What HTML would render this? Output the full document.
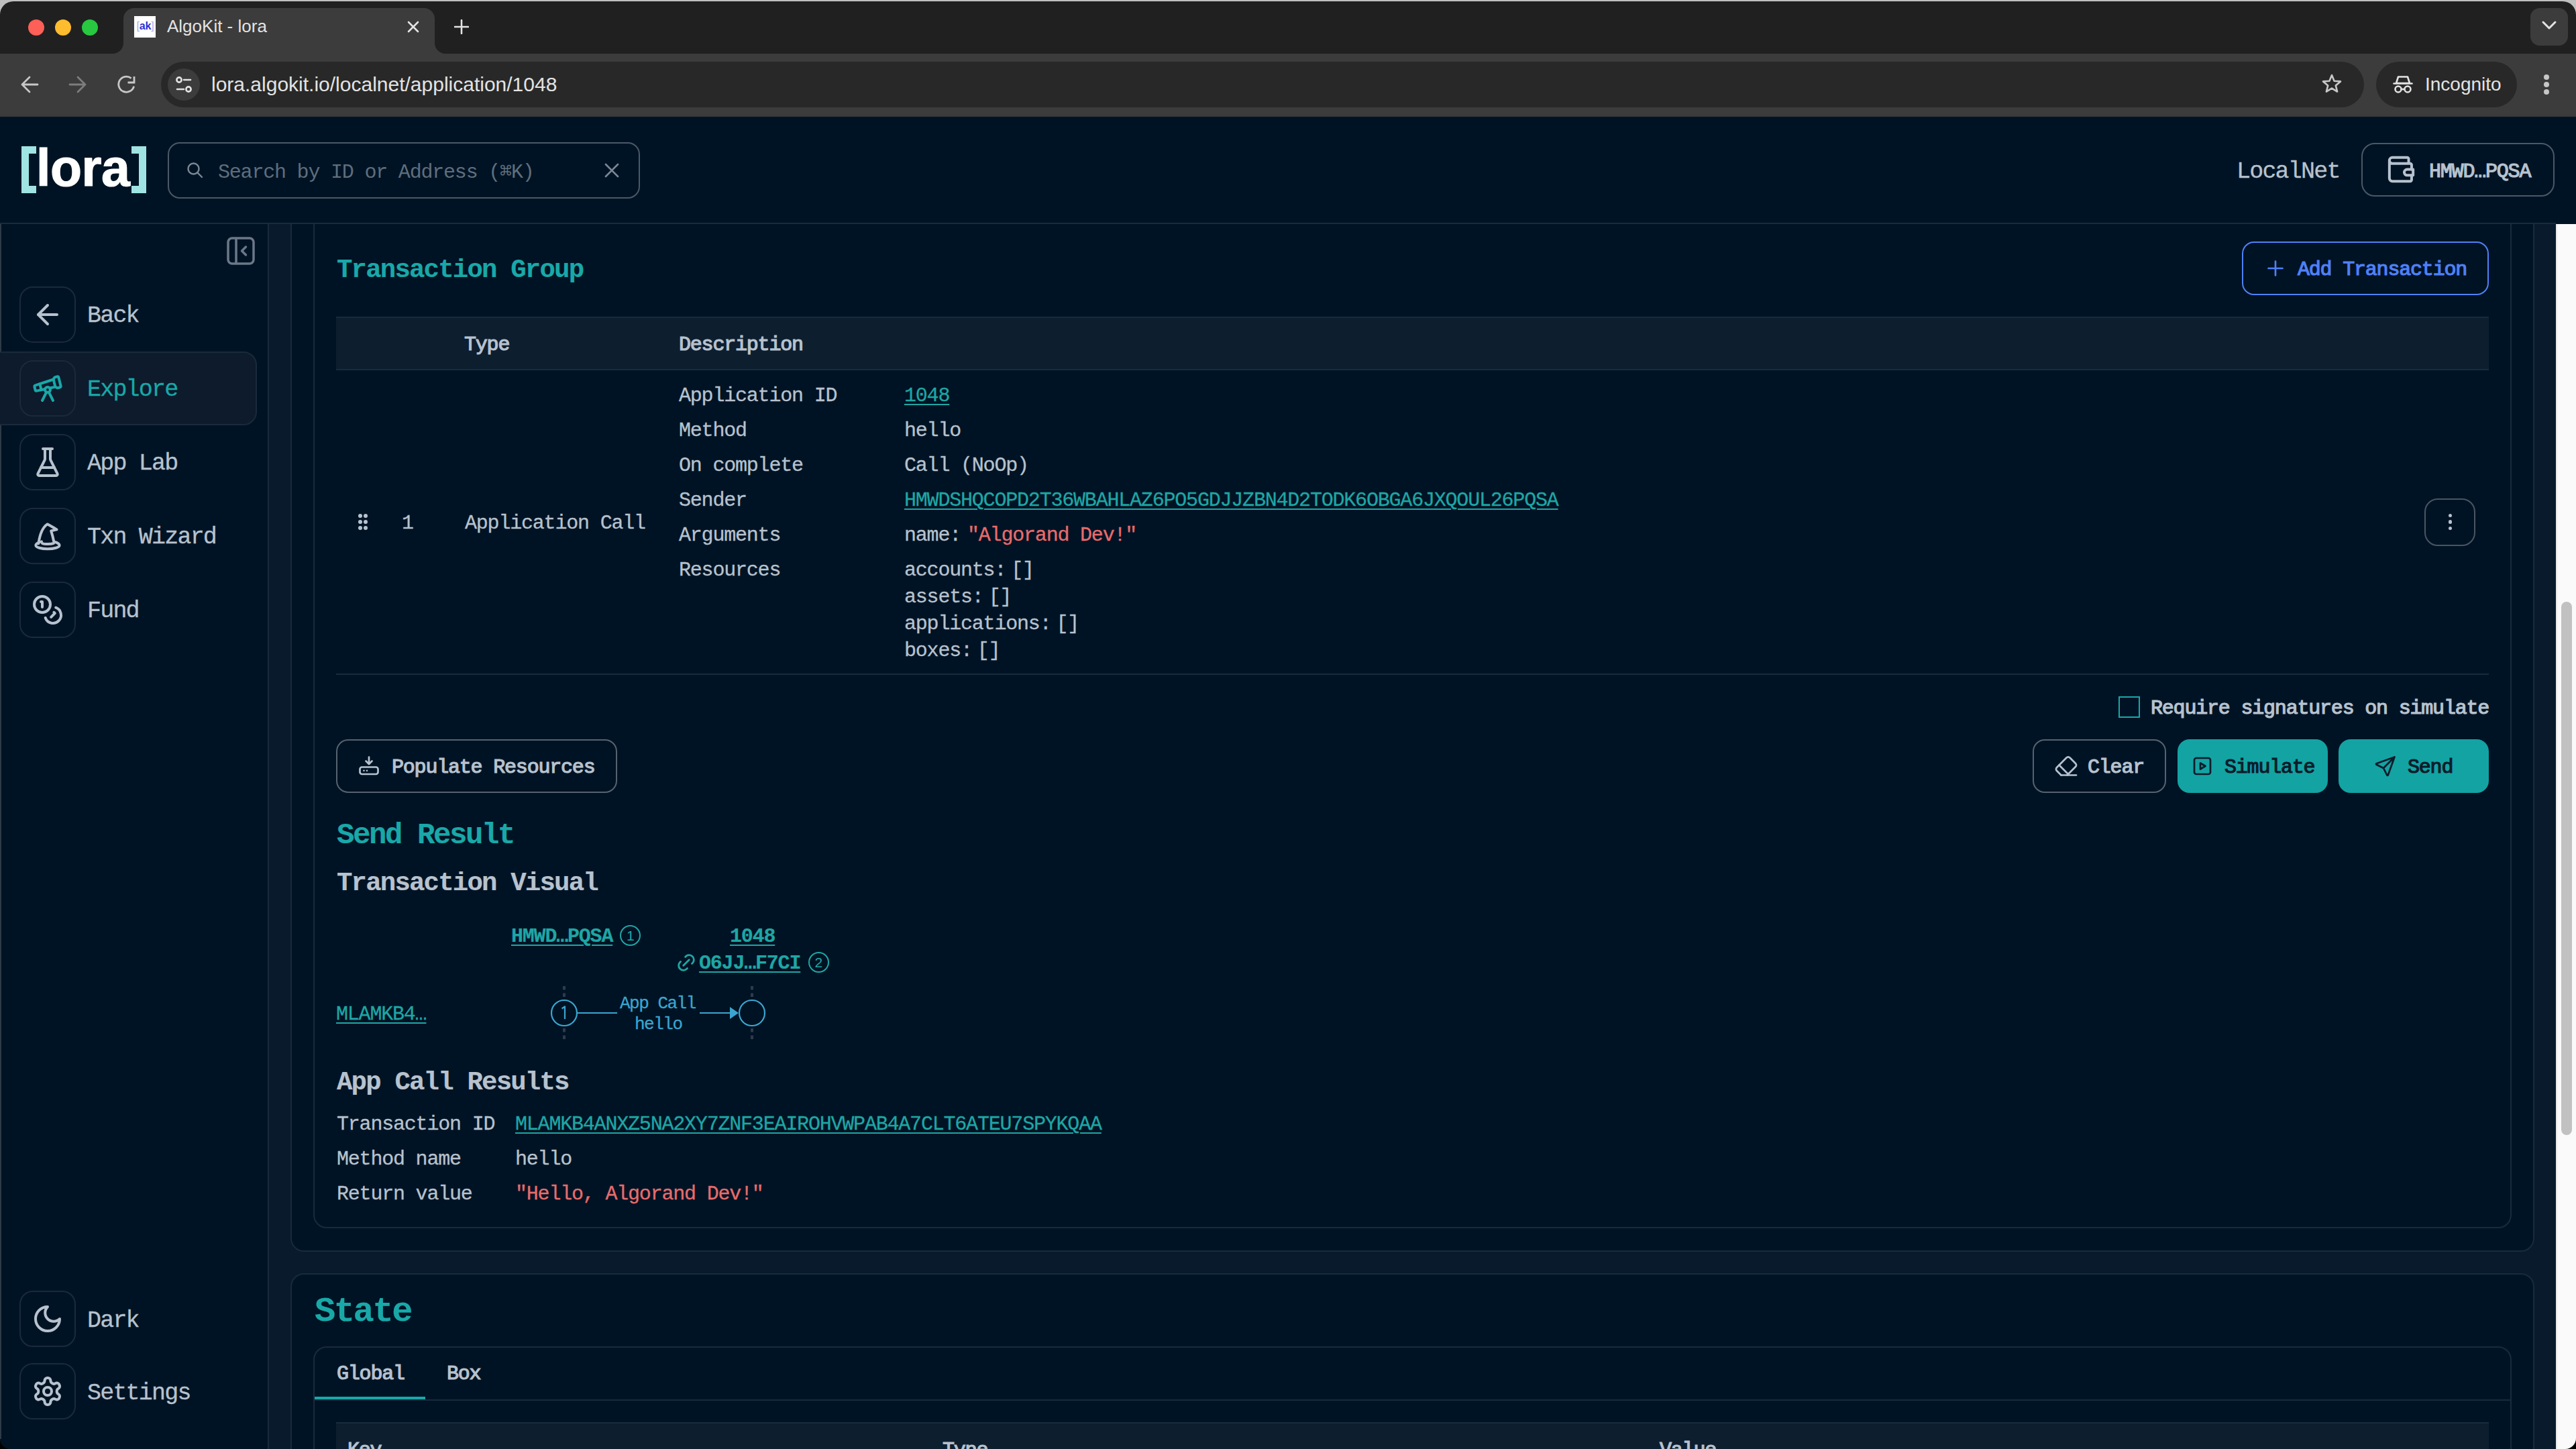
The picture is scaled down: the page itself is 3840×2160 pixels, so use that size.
<!DOCTYPE html><html><head><meta charset="utf-8"><style>
html,body{margin:0;padding:0;width:3840px;height:2160px;overflow:hidden;background:#000;}
.t{position:absolute;white-space:pre;}
.r{position:absolute;box-sizing:border-box;}
u{text-decoration:underline;text-decoration-thickness:2px;text-underline-offset:4px;}
</style></head><body>
<div class="r" style="left:0px;top:0px;width:3840px;height:60px;background:#bfbfbf;border-radius:0;"></div>
<div class="r" style="left:0px;top:1000px;width:3840px;height:1160px;background:#000000;border-radius:0;"></div>
<div class="r" style="left:0px;top:1.5px;width:3840px;height:2158.5px;background:#202020;border-radius:20px 20px 16px 16px;"></div>
<div class="r" style="left:184px;top:12px;width:464px;height:68px;background:#3c3c3c;border-radius:16px 16px 0 0;"></div>
<svg class="r" style="left:168px;top:64px;" width="16" height="16" viewBox="0 0 16 16" fill="none"><path d="M16 0 V16 H0 A16 16 0 0 0 16 0Z" fill="#3c3c3c"/></svg>
<svg class="r" style="left:648px;top:64px;" width="16" height="16" viewBox="0 0 16 16" fill="none"><path d="M0 0 V16 H16 A16 16 0 0 1 0 0Z" fill="#3c3c3c"/></svg>
<div class="r" style="left:42px;top:29px;width:24px;height:24px;background:#fe5f57;border-radius:50%;"></div>
<div class="r" style="left:82px;top:29px;width:24px;height:24px;background:#febc2e;border-radius:50%;"></div>
<div class="r" style="left:122px;top:29px;width:24px;height:24px;background:#28c840;border-radius:50%;"></div>
<div class="r" style="left:200px;top:24px;width:32px;height:32px;background:#ffffff;border-radius:0;"></div>
<div class="t" style="left:203.50px;top:31.45px;font-size:16px;line-height:16px;color:#2f2fd0;font-weight:700;letter-spacing:-0.2px;font-family:'Liberation Sans', sans-serif;"><span style="color:#a8a8ee;font-weight:400">[</span>ak<span style="color:#a8a8ee;font-weight:400">]</span></div>
<div class="t" style="left:249.00px;top:25.99px;font-size:26px;line-height:26px;color:#e3e3e3;font-weight:400;letter-spacing:0px;font-family:'Liberation Sans', sans-serif;">AlgoKit - lora</div>
<svg class="r" style="left:606px;top:30px;" width="20" height="20" viewBox="0 0 20 20" fill="none"><path d="M3 3L17 17M17 3L3 17" stroke="#e3e3e3" stroke-width="2.6" stroke-linecap="round"/></svg>
<svg class="r" style="left:677px;top:29px;" width="22" height="22" viewBox="0 0 22 22" fill="none"><path d="M11 1V21M1 11H21" stroke="#e3e3e3" stroke-width="2.6" stroke-linecap="round"/></svg>
<div class="r" style="left:3772px;top:12px;width:56px;height:56px;background:#3c3c3c;border-radius:14px;"></div>
<svg class="r" style="left:3788px;top:30px;" width="24" height="16" viewBox="0 0 24 16" fill="none"><path d="M3 3L12 12L21 3" stroke="#e3e3e3" stroke-width="3" fill="none" stroke-linecap="round" stroke-linejoin="round"/></svg>
<div class="r" style="left:0px;top:80px;width:3840px;height:94px;background:#3c3c3c;border-radius:0;"></div>
<div class="r" style="left:0px;top:171px;width:3840px;height:3px;background:#3d3a38;border-radius:0;"></div>
<svg class="r" style="left:30px;top:112px;" width="28" height="28" viewBox="0 0 28 28" fill="none"><path d="M26 14H3M14 3L3 14L14 25" stroke="#c7c7c7" stroke-width="2.8" stroke-linecap="round" stroke-linejoin="round"/></svg>
<svg class="r" style="left:102px;top:112px;" width="28" height="28" viewBox="0 0 28 28" fill="none"><path d="M2 14H25M14 3L25 14L14 25" stroke="#7d7d7d" stroke-width="2.8" stroke-linecap="round" stroke-linejoin="round"/></svg>
<svg class="r" style="left:174px;top:112px;" width="28" height="28" viewBox="0 0 28 28" fill="none"><path d="M25.6 16.6A11.6 11.6 0 1 1 21.6 4.6" stroke="#c7c7c7" stroke-width="2.8" fill="none"/><path d="M16.5 11H26V2" stroke="#c7c7c7" stroke-width="2.8" fill="none" stroke-linejoin="miter"/></svg>
<div class="r" style="left:240px;top:92px;width:3284px;height:68px;background:#282828;border-radius:34px;"></div>
<div class="r" style="left:250px;top:102px;width:48px;height:48px;background:#3c3c3c;border-radius:50%;"></div>
<svg class="r" style="left:258px;top:110px;" width="32" height="32" viewBox="0 0 32 32" fill="none"><circle cx="9" cy="9" r="3.6" stroke="#e3e3e3" stroke-width="2.6"/><path d="M16 9H26" stroke="#e3e3e3" stroke-width="2.6" stroke-linecap="round"/><circle cx="23" cy="23" r="3.6" stroke="#e3e3e3" stroke-width="2.6"/><path d="M6 23H16" stroke="#e3e3e3" stroke-width="2.6" stroke-linecap="round"/></svg>
<div class="t" style="left:315.00px;top:110.60px;font-size:30px;line-height:30px;color:#e3e3e3;font-weight:400;letter-spacing:0px;font-family:'Liberation Sans', sans-serif;">lora.algokit.io/localnet/application/1048</div>
<svg class="r" style="left:3460px;top:109px;" width="32" height="32" viewBox="0 0 32 32" fill="none"><path d="M16 3L19.6 11.8L29 12.4L21.8 18.4L24.1 27.6L16 22.6L7.9 27.6L10.2 18.4L3 12.4L12.4 11.8Z" stroke="#c7c7c7" stroke-width="2.6" stroke-linejoin="round" fill="none"/></svg>
<div class="r" style="left:3542px;top:92px;width:210px;height:68px;background:#282828;border-radius:34px;"></div>
<svg class="r" style="left:3566px;top:110px;" width="32" height="32" viewBox="0 0 32 32" fill="none"><path d="M9 4.5H23L26 14H6Z" stroke="#e3e3e3" stroke-width="2.6" stroke-linejoin="round"/><path d="M2.5 14.5H29.5" stroke="#e3e3e3" stroke-width="2.6" stroke-linecap="round"/><circle cx="9" cy="23" r="4.5" stroke="#e3e3e3" stroke-width="2.6"/><circle cx="23" cy="23" r="4.5" stroke="#e3e3e3" stroke-width="2.6"/><path d="M13.5 23H18.5" stroke="#e3e3e3" stroke-width="2.6"/></svg>
<div class="t" style="left:3615.00px;top:112.29px;font-size:28px;line-height:28px;color:#e3e3e3;font-weight:400;letter-spacing:0px;font-family:'Liberation Sans', sans-serif;">Incognito</div>
<div class="r" style="left:3792px;top:111px;width:8px;height:8px;background:#c7c7c7;border-radius:50%;"></div>
<div class="r" style="left:3792px;top:122px;width:8px;height:8px;background:#c7c7c7;border-radius:50%;"></div>
<div class="r" style="left:3792px;top:133px;width:8px;height:8px;background:#c7c7c7;border-radius:50%;"></div>
<div class="r" style="left:0px;top:174px;width:3840px;height:1986px;background:#001324;border-radius:0 0 16px 16px;"></div>
<div class="r" style="left:401px;top:334px;width:3409px;height:1826px;background:#081a2b;border-radius:0;"></div>
<div class="r" style="left:399px;top:334px;width:2px;height:1826px;background:#182b3c;border-radius:0;"></div>
<div class="r" style="left:0px;top:174px;width:1.5px;height:1971px;background:#2c3a48;border-radius:0;"></div>
<div class="r" style="left:3810px;top:334px;width:30px;height:1826px;background:#fafafa;border-radius:0 0 16px 0;"></div>
<div class="r" style="left:3810px;top:334px;width:2px;height:1826px;background:#e9e9e9;border-radius:0;"></div>
<div class="r" style="left:3818px;top:897px;width:16px;height:795px;background:#c1c1c1;border-radius:8px;"></div>
<div class="r" style="left:433px;top:200px;width:3345px;height:1666px;background:#001324;border:2px solid #182b3c;border-radius:20px;"></div>
<div class="r" style="left:467px;top:200px;width:3277px;height:1631px;background:#001324;border:2px solid #182b3c;border-radius:20px;"></div>
<div class="r" style="left:433px;top:1898px;width:3345px;height:402px;background:#001324;border:2px solid #182b3c;border-radius:20px;"></div>
<div class="r" style="left:467px;top:2007px;width:3277px;height:293px;background:#001324;border:2px solid #182b3c;border-radius:20px;"></div>
<div class="r" style="left:0px;top:174px;width:3810px;height:158px;background:#001324;border-radius:0;"></div>
<div class="r" style="left:0px;top:332px;width:3810px;height:2px;background:#182b3c;border-radius:0;"></div>
<div class="r" style="left:32px;top:218px;width:11px;height:70px;background:#9fe3e3;border-radius:0;"></div>
<div class="r" style="left:32px;top:218px;width:22px;height:11px;background:#9fe3e3;border-radius:0;"></div>
<div class="r" style="left:32px;top:277px;width:22px;height:11px;background:#9fe3e3;border-radius:0;"></div>
<div class="r" style="left:207px;top:218px;width:11px;height:70px;background:#9fe3e3;border-radius:0;"></div>
<div class="r" style="left:196px;top:218px;width:22px;height:11px;background:#9fe3e3;border-radius:0;"></div>
<div class="r" style="left:196px;top:277px;width:22px;height:11px;background:#9fe3e3;border-radius:0;"></div>
<div class="t" style="left:54.00px;top:212.30px;font-size:77px;line-height:77px;color:#ffffff;font-weight:700;letter-spacing:-0.5px;font-family:'Liberation Sans', sans-serif;-webkit-text-stroke:1.2px #fff;">lora</div>
<div class="r" style="left:250px;top:212px;width:704px;height:84px;background:transparent;border:2px solid #4a5867;border-radius:18px;"></div>
<svg class="r" style="left:277px;top:240px;" width="28" height="28" viewBox="0 0 28 28" fill="none"><circle cx="11.5" cy="11.5" r="8" stroke="#7a8896" stroke-width="2.4"/><path d="M17.5 17.5L24 24" stroke="#7a8896" stroke-width="2.4" stroke-linecap="round"/></svg>
<div class="t" style="left:325.00px;top:242.02px;font-size:30px;line-height:30px;color:#5f6e7d;font-weight:400;letter-spacing:-1.2px;font-family:'Liberation Mono', monospace;-webkit-text-stroke:0.3px currentColor;-webkit-text-stroke:0px;">Search by ID or Address (⌘K)</div>
<svg class="r" style="left:900px;top:242px;" width="24" height="24" viewBox="0 0 24 24" fill="none"><path d="M3 3L21 21M21 3L3 21" stroke="#7a8896" stroke-width="2.6" stroke-linecap="round"/></svg>
<div class="t" style="left:3334.00px;top:239.19px;font-size:35px;line-height:35px;color:#b7c2ce;font-weight:400;letter-spacing:-1.8px;font-family:'Liberation Mono', monospace;-webkit-text-stroke:0.3px currentColor;">LocalNet</div>
<div class="r" style="left:3520px;top:213px;width:288px;height:80px;background:transparent;border:2px solid #4a5867;border-radius:20px;"></div>
<svg class="r" style="left:3552.8px;top:226.3px;" width="53" height="53" viewBox="0 0 24 24" fill="none"><path d="M17 8v-3a1 1 0 0 0 -1 -1h-10a2 2 0 0 0 0 4h12a1 1 0 0 1 1 1v3m0 4v3a1 1 0 0 1 -1 1h-12a2 2 0 0 1 -2 -2v-12" stroke="#b7c2ce" stroke-width="1.8" stroke-linecap="round" stroke-linejoin="round"/><path d="M20 12v4h-4a2 2 0 0 1 0 -4h4" stroke="#b7c2ce" stroke-width="1.8" stroke-linecap="round" stroke-linejoin="round"/></svg>
<div class="t" style="left:3621.00px;top:241.02px;font-size:30px;line-height:30px;color:#b7c2ce;font-weight:400;letter-spacing:-1.2px;font-family:'Liberation Mono', monospace;-webkit-text-stroke:1.2px currentColor;">HMWD…PQSA</div>
<svg class="r" style="left:337px;top:352px;" width="44" height="44" viewBox="0 0 44 44" fill="none"><rect x="3" y="3" width="38" height="38" rx="6" stroke="#6a7888" stroke-width="3.5"/><path d="M15 3V41" stroke="#6a7888" stroke-width="3.5"/><path d="M29.5 16L23.5 22L29.5 28" stroke="#6a7888" stroke-width="3.5" stroke-linecap="round" stroke-linejoin="round"/></svg>
<div class="r" style="left:-20px;top:524px;width:403px;height:110px;background:#0d1b2c;border:2px solid #1a2a3a;border-radius:20px;"></div>
<div class="r" style="left:29px;top:427px;width:84px;height:84px;background:#001324;border:2px solid #1a2a3a;border-radius:20px;"></div>
<div class="t" style="left:130.00px;top:454.19px;font-size:35px;line-height:35px;color:#b7c2ce;font-weight:400;letter-spacing:-1.8px;font-family:'Liberation Mono', monospace;-webkit-text-stroke:0.3px currentColor;">Back</div>
<div class="r" style="left:29px;top:537px;width:84px;height:84px;background:#0d1b2c;border:2px solid #1a2a3a;border-radius:20px;"></div>
<div class="t" style="left:130.00px;top:564.19px;font-size:35px;line-height:35px;color:#19a8a8;font-weight:400;letter-spacing:-1.8px;font-family:'Liberation Mono', monospace;-webkit-text-stroke:0.3px currentColor;">Explore</div>
<div class="r" style="left:29px;top:647px;width:84px;height:84px;background:#001324;border:2px solid #1a2a3a;border-radius:20px;"></div>
<div class="t" style="left:130.00px;top:674.19px;font-size:35px;line-height:35px;color:#b7c2ce;font-weight:400;letter-spacing:-1.8px;font-family:'Liberation Mono', monospace;-webkit-text-stroke:0.3px currentColor;">App Lab</div>
<div class="r" style="left:29px;top:757px;width:84px;height:84px;background:#001324;border:2px solid #1a2a3a;border-radius:20px;"></div>
<div class="t" style="left:130.00px;top:784.19px;font-size:35px;line-height:35px;color:#b7c2ce;font-weight:400;letter-spacing:-1.8px;font-family:'Liberation Mono', monospace;-webkit-text-stroke:0.3px currentColor;">Txn Wizard</div>
<div class="r" style="left:29px;top:867px;width:84px;height:84px;background:#001324;border:2px solid #1a2a3a;border-radius:20px;"></div>
<div class="t" style="left:130.00px;top:894.19px;font-size:35px;line-height:35px;color:#b7c2ce;font-weight:400;letter-spacing:-1.8px;font-family:'Liberation Mono', monospace;-webkit-text-stroke:0.3px currentColor;">Fund</div>
<div class="r" style="left:29px;top:1924px;width:84px;height:84px;background:#001324;border:2px solid #1a2a3a;border-radius:20px;"></div>
<div class="t" style="left:130.00px;top:1951.69px;font-size:35px;line-height:35px;color:#b7c2ce;font-weight:400;letter-spacing:-1.8px;font-family:'Liberation Mono', monospace;-webkit-text-stroke:0.3px currentColor;">Dark</div>
<div class="r" style="left:29px;top:2032px;width:84px;height:84px;background:#001324;border:2px solid #1a2a3a;border-radius:20px;"></div>
<div class="t" style="left:130.00px;top:2060.19px;font-size:35px;line-height:35px;color:#b7c2ce;font-weight:400;letter-spacing:-1.8px;font-family:'Liberation Mono', monospace;-webkit-text-stroke:0.3px currentColor;">Settings</div>
<svg class="r" style="left:47px;top:445px;" width="48" height="48" viewBox="0 0 24 24" fill="none"><path d="m12 19-7-7 7-7" stroke="#b7c2ce" stroke-width="2" stroke-linecap="round" stroke-linejoin="round" fill="none"/><path d="M19 12H5" stroke="#b7c2ce" stroke-width="2" stroke-linecap="round" stroke-linejoin="round" fill="none"/></svg>
<svg class="r" style="left:47px;top:555px;" width="48" height="48" viewBox="0 0 24 24" fill="none"><path d="m10.065 12.493-6.18 1.318a.934.934 0 0 1-1.108-.702l-.537-2.15a1.07 1.07 0 0 1 .691-1.265l13.504-4.44" stroke="#19a8a8" stroke-width="2" stroke-linecap="round" stroke-linejoin="round" fill="none"/><path d="m13.56 11.747 4.332-.924" stroke="#19a8a8" stroke-width="2" stroke-linecap="round" stroke-linejoin="round" fill="none"/><path d="m16 21-3.105-6.21" stroke="#19a8a8" stroke-width="2" stroke-linecap="round" stroke-linejoin="round" fill="none"/><path d="M16.485 5.94a2 2 0 0 1 1.455-2.425l1.09-.272a1 1 0 0 1 1.212.727l1.515 6.06a1 1 0 0 1-.727 1.213l-1.09.272a2 2 0 0 1-2.425-1.455z" stroke="#19a8a8" stroke-width="2" stroke-linecap="round" stroke-linejoin="round" fill="none"/><path d="m6.158 8.633 1.114 4.456" stroke="#19a8a8" stroke-width="2" stroke-linecap="round" stroke-linejoin="round" fill="none"/><path d="m8 21 3.105-6.21" stroke="#19a8a8" stroke-width="2" stroke-linecap="round" stroke-linejoin="round" fill="none"/><circle cx="12" cy="13" r="2" stroke="#19a8a8" stroke-width="2" stroke-linecap="round" stroke-linejoin="round" fill="none"/></svg>
<svg class="r" style="left:47px;top:665px;" width="48" height="48" viewBox="0 0 24 24" fill="none"><path d="M10 2v7.527a2 2 0 0 1-.211.896L4.72 20.55a1 1 0 0 0 .9 1.45h12.76a1 1 0 0 0 .9-1.45l-5.069-10.127A2 2 0 0 1 14 9.527V2" stroke="#b7c2ce" stroke-width="2" stroke-linecap="round" stroke-linejoin="round" fill="none"/><path d="M8.5 2h7" stroke="#b7c2ce" stroke-width="2" stroke-linecap="round" stroke-linejoin="round" fill="none"/><path d="M7 16h10" stroke="#b7c2ce" stroke-width="2" stroke-linecap="round" stroke-linejoin="round" fill="none"/></svg>
<svg class="r" style="left:47px;top:775px;" width="48" height="48" viewBox="0 0 24 24" fill="none"><path d="M5.2 17.6C6 12 7.5 6 11.8 3.2C13.5 4 16 5.5 18.8 7.2L14.6 8.2C15.3 10.5 16 13 16.6 16" stroke="#b7c2ce" stroke-width="2" stroke-linecap="round" stroke-linejoin="round" fill="none"/><path d="M7.5 16.2C5 16.8 3.2 17.8 3.2 19C3.2 20.5 7.2 21.6 12 21.6C16.8 21.6 20.8 20.5 20.8 19C20.8 17.9 19.2 17 17 16.4" stroke="#b7c2ce" stroke-width="2" stroke-linecap="round" stroke-linejoin="round" fill="none"/><path d="M8 17.5C9.5 18.2 14.5 18.2 16.5 17.4" stroke="#b7c2ce" stroke-width="2" stroke-linecap="round" stroke-linejoin="round" fill="none"/></svg>
<svg class="r" style="left:47px;top:885px;" width="48" height="48" viewBox="0 0 24 24" fill="none"><circle cx="8" cy="8" r="6" stroke="#b7c2ce" stroke-width="2" stroke-linecap="round" stroke-linejoin="round" fill="none"/><path d="M18.09 10.37A6 6 0 1 1 10.34 18" stroke="#b7c2ce" stroke-width="2" stroke-linecap="round" stroke-linejoin="round" fill="none"/><path d="M7 6h1v4" stroke="#b7c2ce" stroke-width="2" stroke-linecap="round" stroke-linejoin="round" fill="none"/><path d="m16.71 13.88.7.71-2.82 2.82" stroke="#b7c2ce" stroke-width="2" stroke-linecap="round" stroke-linejoin="round" fill="none"/></svg>
<svg class="r" style="left:47px;top:1942px;" width="48" height="48" viewBox="0 0 24 24" fill="none"><path d="M12 3a6 6 0 0 0 9 9 9 9 0 1 1-9-9Z" stroke="#b7c2ce" stroke-width="2" stroke-linecap="round" stroke-linejoin="round" fill="none"/></svg>
<svg class="r" style="left:47px;top:2050px;" width="48" height="48" viewBox="0 0 24 24" fill="none"><path d="M12.22 2h-.44a2 2 0 0 0-2 2v.18a2 2 0 0 1-1 1.73l-.43.25a2 2 0 0 1-2 0l-.15-.08a2 2 0 0 0-2.73.73l-.22.38a2 2 0 0 0 .73 2.73l.15.1a2 2 0 0 1 1 1.72v.51a2 2 0 0 1-1 1.74l-.15.09a2 2 0 0 0-.73 2.73l.22.38a2 2 0 0 0 2.73.73l.15-.08a2 2 0 0 1 2 0l.43.25a2 2 0 0 1 1 1.73V20a2 2 0 0 0 2 2h.44a2 2 0 0 0 2-2v-.18a2 2 0 0 1 1-1.73l.43-.25a2 2 0 0 1 2 0l.15.08a2 2 0 0 0 2.73-.73l.22-.39a2 2 0 0 0-.73-2.73l-.15-.08a2 2 0 0 1-1-1.74v-.5a2 2 0 0 1 1-1.74l.15-.09a2 2 0 0 0 .73-2.73l-.22-.38a2 2 0 0 0-2.73-.73l-.15.08a2 2 0 0 1-2 0l-.43-.25a2 2 0 0 1-1-1.73V4a2 2 0 0 0-2-2z" stroke="#b7c2ce" stroke-width="2" stroke-linecap="round" stroke-linejoin="round" fill="none"/><circle cx="12" cy="12" r="3" stroke="#b7c2ce" stroke-width="2" stroke-linecap="round" stroke-linejoin="round" fill="none"/></svg>
<div class="t" style="left:502.00px;top:384.12px;font-size:39px;line-height:39px;color:#19a8a8;font-weight:700;letter-spacing:-1.8px;font-family:'Liberation Mono', monospace;-webkit-text-stroke:0.2px currentColor;">Transaction Group</div>
<div class="r" style="left:3342px;top:360px;width:368px;height:80px;background:transparent;border:2.5px solid #4f80f7;border-radius:18px;"></div>
<svg class="r" style="left:3374px;top:382px;" width="36" height="36" viewBox="0 0 24 24" fill="none"><path d="M5 12h14M12 5v14" stroke="#4f80f7" stroke-width="1.8" stroke-linecap="round"/></svg>
<div class="t" style="left:3425.00px;top:387.02px;font-size:30px;line-height:30px;color:#4f80f7;font-weight:400;letter-spacing:-1.2px;font-family:'Liberation Mono', monospace;-webkit-text-stroke:1.2px currentColor;">Add Transaction</div>
<div class="r" style="left:501px;top:472px;width:3209px;height:80px;background:#0d1e2f;border:2px solid #182b3c;border-radius:0;border-left:none;border-right:none;"></div>
<div class="t" style="left:692.00px;top:499.02px;font-size:30px;line-height:30px;color:#b7c2ce;font-weight:400;letter-spacing:-1.2px;font-family:'Liberation Mono', monospace;-webkit-text-stroke:1.2px currentColor;">Type</div>
<div class="t" style="left:1012.00px;top:499.02px;font-size:30px;line-height:30px;color:#b7c2ce;font-weight:400;letter-spacing:-1.2px;font-family:'Liberation Mono', monospace;-webkit-text-stroke:1.2px currentColor;">Description</div>
<div class="r" style="left:534px;top:766px;width:6px;height:6px;background:#b7c2ce;border-radius:50%;"></div>
<div class="r" style="left:534px;top:775px;width:6px;height:6px;background:#b7c2ce;border-radius:50%;"></div>
<div class="r" style="left:534px;top:784px;width:6px;height:6px;background:#b7c2ce;border-radius:50%;"></div>
<div class="r" style="left:542px;top:766px;width:6px;height:6px;background:#b7c2ce;border-radius:50%;"></div>
<div class="r" style="left:542px;top:775px;width:6px;height:6px;background:#b7c2ce;border-radius:50%;"></div>
<div class="r" style="left:542px;top:784px;width:6px;height:6px;background:#b7c2ce;border-radius:50%;"></div>
<div class="t" style="left:599.00px;top:765.02px;font-size:30px;line-height:30px;color:#b7c2ce;font-weight:400;letter-spacing:-1.2px;font-family:'Liberation Mono', monospace;-webkit-text-stroke:0.3px currentColor;">1</div>
<div class="t" style="left:693.00px;top:765.02px;font-size:30px;line-height:30px;color:#b7c2ce;font-weight:400;letter-spacing:-1.2px;font-family:'Liberation Mono', monospace;-webkit-text-stroke:0.3px currentColor;">Application Call</div>
<div class="t" style="left:1012.00px;top:575.02px;font-size:30px;line-height:30px;color:#b7c2ce;font-weight:400;letter-spacing:-1.2px;font-family:'Liberation Mono', monospace;-webkit-text-stroke:0.3px currentColor;">Application ID</div>
<div class="t" style="left:1012.00px;top:627.02px;font-size:30px;line-height:30px;color:#b7c2ce;font-weight:400;letter-spacing:-1.2px;font-family:'Liberation Mono', monospace;-webkit-text-stroke:0.3px currentColor;">Method</div>
<div class="t" style="left:1012.00px;top:679.02px;font-size:30px;line-height:30px;color:#b7c2ce;font-weight:400;letter-spacing:-1.2px;font-family:'Liberation Mono', monospace;-webkit-text-stroke:0.3px currentColor;">On complete</div>
<div class="t" style="left:1012.00px;top:731.02px;font-size:30px;line-height:30px;color:#b7c2ce;font-weight:400;letter-spacing:-1.2px;font-family:'Liberation Mono', monospace;-webkit-text-stroke:0.3px currentColor;">Sender</div>
<div class="t" style="left:1012.00px;top:783.02px;font-size:30px;line-height:30px;color:#b7c2ce;font-weight:400;letter-spacing:-1.2px;font-family:'Liberation Mono', monospace;-webkit-text-stroke:0.3px currentColor;">Arguments</div>
<div class="t" style="left:1012.00px;top:835.02px;font-size:30px;line-height:30px;color:#b7c2ce;font-weight:400;letter-spacing:-1.2px;font-family:'Liberation Mono', monospace;-webkit-text-stroke:0.3px currentColor;">Resources</div>
<div class="t" style="left:1348.00px;top:575.02px;font-size:30px;line-height:30px;color:#1fa6a4;font-weight:400;letter-spacing:-1.2px;font-family:'Liberation Mono', monospace;-webkit-text-stroke:0.3px currentColor;"><u>1048</u></div>
<div class="t" style="left:1348.00px;top:627.02px;font-size:30px;line-height:30px;color:#b7c2ce;font-weight:400;letter-spacing:-1.2px;font-family:'Liberation Mono', monospace;-webkit-text-stroke:0.3px currentColor;">hello</div>
<div class="t" style="left:1348.00px;top:679.02px;font-size:30px;line-height:30px;color:#b7c2ce;font-weight:400;letter-spacing:-1.2px;font-family:'Liberation Mono', monospace;-webkit-text-stroke:0.3px currentColor;">Call (NoOp)</div>
<div class="t" style="left:1348.00px;top:731.02px;font-size:30px;line-height:30px;color:#1fa6a4;font-weight:400;letter-spacing:-1.2px;font-family:'Liberation Mono', monospace;-webkit-text-stroke:0.3px currentColor;"><u>HMWDSHQCOPD2T36WBAHLAZ6PO5GDJJZBN4D2TODK6OBGA6JXQOUL26PQSA</u></div>
<div class="t" style="left:1348.00px;top:783.02px;font-size:30px;line-height:30px;color:#b7c2ce;font-weight:400;letter-spacing:-1.2px;font-family:'Liberation Mono', monospace;-webkit-text-stroke:0.3px currentColor;">name:<span style="color:#e86c6c;margin-left:10px">"Algorand Dev!"</span></div>
<div class="t" style="left:1348.00px;top:835.02px;font-size:30px;line-height:30px;color:#b7c2ce;font-weight:400;letter-spacing:-1.2px;font-family:'Liberation Mono', monospace;-webkit-text-stroke:0.3px currentColor;">accounts:<span style="margin-left:8px">[]</span></div>
<div class="t" style="left:1348.00px;top:875.02px;font-size:30px;line-height:30px;color:#b7c2ce;font-weight:400;letter-spacing:-1.2px;font-family:'Liberation Mono', monospace;-webkit-text-stroke:0.3px currentColor;">assets:<span style="margin-left:8px">[]</span></div>
<div class="t" style="left:1348.00px;top:914.52px;font-size:30px;line-height:30px;color:#b7c2ce;font-weight:400;letter-spacing:-1.2px;font-family:'Liberation Mono', monospace;-webkit-text-stroke:0.3px currentColor;">applications:<span style="margin-left:8px">[]</span></div>
<div class="t" style="left:1348.00px;top:955.02px;font-size:30px;line-height:30px;color:#b7c2ce;font-weight:400;letter-spacing:-1.2px;font-family:'Liberation Mono', monospace;-webkit-text-stroke:0.3px currentColor;">boxes:<span style="margin-left:8px">[]</span></div>
<div class="r" style="left:3614px;top:743px;width:76px;height:71px;background:transparent;border:2px solid #4a5563;border-radius:20px;"></div>
<div class="r" style="left:3649.5px;top:765.9px;width:5.199999999999818px;height:5.2000000000000455px;background:#b7c2ce;border-radius:50%;"></div>
<div class="r" style="left:3649.5px;top:775.4px;width:5.199999999999818px;height:5.2000000000000455px;background:#b7c2ce;border-radius:50%;"></div>
<div class="r" style="left:3649.5px;top:784.9px;width:5.199999999999818px;height:5.2000000000000455px;background:#b7c2ce;border-radius:50%;"></div>
<div class="r" style="left:501px;top:1004px;width:3209px;height:2px;background:#182b3c;border-radius:0;"></div>
<div class="r" style="left:3158px;top:1038px;width:32px;height:32px;background:transparent;border:2px solid #19a8a8;border-radius:0;"></div>
<div class="t" style="left:3206.00px;top:1041.02px;font-size:30px;line-height:30px;color:#b7c2ce;font-weight:400;letter-spacing:-1.2px;font-family:'Liberation Mono', monospace;-webkit-text-stroke:1.2px currentColor;">Require signatures on simulate</div>
<div class="r" style="left:501px;top:1102px;width:419px;height:80px;background:transparent;border:2px solid #566270;border-radius:18px;"></div>
<svg class="r" style="left:532px;top:1124px;" width="36" height="36" viewBox="0 0 24 24" fill="none"><path d="M12 3V10M12 10L9 7M12 10L15 7" stroke="#b7c2ce" stroke-width="1.8" stroke-linecap="round" stroke-linejoin="round" fill="none"/><rect x="3" y="13" width="18" height="7" rx="2" stroke="#b7c2ce" stroke-width="1.8" fill="none"/><path d="M7 16.5H7.01M10 16.5H10.01" stroke="#b7c2ce" stroke-width="1.8" stroke-linecap="round"/></svg>
<div class="t" style="left:584.00px;top:1129.02px;font-size:30px;line-height:30px;color:#b7c2ce;font-weight:400;letter-spacing:-1.2px;font-family:'Liberation Mono', monospace;-webkit-text-stroke:1.2px currentColor;">Populate Resources</div>
<div class="r" style="left:3030px;top:1102px;width:199px;height:80px;background:transparent;border:2px solid #566270;border-radius:18px;"></div>
<svg class="r" style="left:3062px;top:1124px;" width="36" height="36" viewBox="0 0 24 24" fill="none"><path d="m7 21-4.3-4.3c-1-1-1-2.5 0-3.4l9.6-9.6c1-1 2.5-1 3.4 0l5.6 5.6c1 1 1 2.5 0 3.4L13 21" stroke="#b7c2ce" stroke-width="1.8" stroke-linecap="round" stroke-linejoin="round" fill="none"/><path d="M22 21H7" stroke="#b7c2ce" stroke-width="1.8" stroke-linecap="round" fill="none"/><path d="m5 11 9 9" stroke="#b7c2ce" stroke-width="1.8" stroke-linecap="round" fill="none"/></svg>
<div class="t" style="left:3112.00px;top:1129.02px;font-size:30px;line-height:30px;color:#b7c2ce;font-weight:400;letter-spacing:-1.2px;font-family:'Liberation Mono', monospace;-webkit-text-stroke:1.2px currentColor;">Clear</div>
<div class="r" style="left:3246px;top:1102px;width:224px;height:80px;background:#13a3a3;border-radius:18px;"></div>
<svg class="r" style="left:3265px;top:1124px;" width="36" height="36" viewBox="0 0 24 24" fill="none"><rect x="4" y="4" width="16" height="16" rx="2" stroke="#0b1c2b" stroke-width="1.8" fill="none"/><path d="M10 9L15 12L10 15Z" stroke="#0b1c2b" stroke-width="1.8" stroke-linejoin="round" fill="none"/></svg>
<div class="t" style="left:3316.00px;top:1129.02px;font-size:30px;line-height:30px;color:#0b1c2b;font-weight:400;letter-spacing:-1.2px;font-family:'Liberation Mono', monospace;-webkit-text-stroke:1.2px currentColor;">Simulate</div>
<div class="r" style="left:3486px;top:1102px;width:224px;height:80px;background:#13a3a3;border-radius:18px;"></div>
<svg class="r" style="left:3538px;top:1124px;" width="36" height="36" viewBox="0 0 24 24" fill="none"><path d="M10 14L21 3M21 3L14.5 21A.55 .55 0 0 1 13.5 21L10 14L3 10.5A.55 .55 0 0 1 3 9.5L21 3" stroke="#0b1c2b" stroke-width="1.8" stroke-linecap="round" stroke-linejoin="round" fill="none"/></svg>
<div class="t" style="left:3589.00px;top:1129.02px;font-size:30px;line-height:30px;color:#0b1c2b;font-weight:400;letter-spacing:-1.2px;font-family:'Liberation Mono', monospace;-webkit-text-stroke:1.2px currentColor;">Send</div>
<div class="t" style="left:502.00px;top:1223.29px;font-size:44px;line-height:44px;color:#19a8a8;font-weight:700;letter-spacing:-2.4px;font-family:'Liberation Mono', monospace;-webkit-text-stroke:0.2px currentColor;">Send Result</div>
<div class="t" style="left:502.00px;top:1298.12px;font-size:39px;line-height:39px;color:#b7c2ce;font-weight:700;letter-spacing:-1.8px;font-family:'Liberation Mono', monospace;-webkit-text-stroke:0.2px currentColor;">Transaction Visual</div>
<div class="t" style="left:762.00px;top:1381.02px;font-size:30px;line-height:30px;color:#1fa6a4;font-weight:700;letter-spacing:-1.2px;font-family:'Liberation Mono', monospace;-webkit-text-stroke:0.2px currentColor;"><u>HMWD…PQSA</u></div>
<div class="r" style="left:924.0px;top:1378.5px;width:31.0px;height:31.0px;background:transparent;border:2px solid #1fa6a4;border-radius:50%;"></div>
<div class="t" style="left:934.00px;top:1383.72px;font-size:21px;line-height:21px;color:#1fa6a4;font-weight:400;letter-spacing:0px;font-family:'Liberation Sans', sans-serif;">1</div>
<div class="t" style="left:1088.00px;top:1381.02px;font-size:30px;line-height:30px;color:#1fa6a4;font-weight:700;letter-spacing:-1.2px;font-family:'Liberation Mono', monospace;-webkit-text-stroke:0.2px currentColor;"><u>1048</u></div>
<svg class="r" style="left:1006px;top:1418px;" width="34" height="34" viewBox="0 0 24 24" fill="none"><path d="M9 15L15 9" stroke="#1fa6a4" stroke-width="2" stroke-linecap="round"/><path d="M11 6L11.46 5.46A5 5 0 0 1 18.53 12.54L18 13" stroke="#1fa6a4" stroke-width="2" stroke-linecap="round" fill="none"/><path d="M13 18L12.6 18.54A5.07 5.07 0 0 1 5.46 18.54A4.95 4.95 0 0 1 5.46 11.5L6 11" stroke="#1fa6a4" stroke-width="2" stroke-linecap="round" fill="none"/></svg>
<div class="t" style="left:1042.00px;top:1421.02px;font-size:30px;line-height:30px;color:#1fa6a4;font-weight:700;letter-spacing:-1.2px;font-family:'Liberation Mono', monospace;-webkit-text-stroke:0.2px currentColor;"><u>O6JJ…F7CI</u></div>
<div class="r" style="left:1204.5px;top:1418.5px;width:31.0px;height:31.0px;background:transparent;border:2px solid #1fa6a4;border-radius:50%;"></div>
<div class="t" style="left:1214.50px;top:1423.72px;font-size:21px;line-height:21px;color:#1fa6a4;font-weight:400;letter-spacing:0px;font-family:'Liberation Sans', sans-serif;">2</div>
<div class="t" style="left:501.00px;top:1497.02px;font-size:30px;line-height:30px;color:#1fa6a4;font-weight:400;letter-spacing:-1.2px;font-family:'Liberation Mono', monospace;-webkit-text-stroke:0.3px currentColor;"><u>MLAMKB4…</u></div>
<svg class="r" style="left:839px;top:1470px;" width="4" height="80" viewBox="0 0 4 80" fill="none"><path d="M2 0V80" stroke="#2c3c4c" stroke-width="4" stroke-dasharray="5.5 5"/></svg>
<svg class="r" style="left:1119px;top:1470px;" width="4" height="80" viewBox="0 0 4 80" fill="none"><path d="M2 0V80" stroke="#2c3c4c" stroke-width="4" stroke-dasharray="5.5 5"/></svg>
<svg class="r" style="left:819px;top:1488px;" width="44" height="44" viewBox="0 0 44 44" fill="none"><circle cx="22" cy="22" r="19" fill="#001324" stroke="#3aa6d0" stroke-width="2.2"/><path d="M18.5 15.5L23 12.5V31" stroke="#3aa6d0" stroke-width="2.2" fill="none" stroke-linejoin="round"/></svg>
<svg class="r" style="left:1099px;top:1488px;" width="44" height="44" viewBox="0 0 44 44" fill="none"><circle cx="22" cy="22" r="19" fill="#001324" stroke="#3aa6d0" stroke-width="2.2"/></svg>
<div class="r" style="left:861px;top:1509px;width:59px;height:2px;background:#3aa6d0;border-radius:0;"></div>
<div class="r" style="left:1043px;top:1509px;width:47px;height:2px;background:#3aa6d0;border-radius:0;"></div>
<svg class="r" style="left:1088px;top:1501px;" width="13" height="18" viewBox="0 0 13 18" fill="none"><path d="M0 0L13 9L0 18Z" fill="#3aa6d0"/></svg>
<div class="t" style="left:924.00px;top:1483.08px;font-size:26px;line-height:26px;color:#3aa6d0;font-weight:400;letter-spacing:-1.5px;font-family:'Liberation Mono', monospace;-webkit-text-stroke:0.3px currentColor;">App Call</div>
<div class="t" style="left:946.00px;top:1514.08px;font-size:26px;line-height:26px;color:#3aa6d0;font-weight:400;letter-spacing:-1.5px;font-family:'Liberation Mono', monospace;-webkit-text-stroke:0.3px currentColor;">hello</div>
<div class="t" style="left:502.00px;top:1595.12px;font-size:39px;line-height:39px;color:#b7c2ce;font-weight:700;letter-spacing:-1.8px;font-family:'Liberation Mono', monospace;-webkit-text-stroke:0.2px currentColor;">App Call Results</div>
<div class="t" style="left:502.00px;top:1661.02px;font-size:30px;line-height:30px;color:#b7c2ce;font-weight:400;letter-spacing:-1.2px;font-family:'Liberation Mono', monospace;-webkit-text-stroke:0.3px currentColor;">Transaction ID</div>
<div class="t" style="left:768.00px;top:1661.02px;font-size:30px;line-height:30px;color:#1fa6a4;font-weight:400;letter-spacing:-1.2px;font-family:'Liberation Mono', monospace;-webkit-text-stroke:0.3px currentColor;"><u>MLAMKB4ANXZ5NA2XY7ZNF3EAIROHVWPAB4A7CLT6ATEU7SPYKQAA</u></div>
<div class="t" style="left:502.00px;top:1713.02px;font-size:30px;line-height:30px;color:#b7c2ce;font-weight:400;letter-spacing:-1.2px;font-family:'Liberation Mono', monospace;-webkit-text-stroke:0.3px currentColor;">Method name</div>
<div class="t" style="left:768.00px;top:1713.02px;font-size:30px;line-height:30px;color:#b7c2ce;font-weight:400;letter-spacing:-1.2px;font-family:'Liberation Mono', monospace;-webkit-text-stroke:0.3px currentColor;">hello</div>
<div class="t" style="left:502.00px;top:1765.02px;font-size:30px;line-height:30px;color:#b7c2ce;font-weight:400;letter-spacing:-1.2px;font-family:'Liberation Mono', monospace;-webkit-text-stroke:0.3px currentColor;">Return value</div>
<div class="t" style="left:768.00px;top:1765.02px;font-size:30px;line-height:30px;color:#e86c6c;font-weight:400;letter-spacing:-1.2px;font-family:'Liberation Mono', monospace;-webkit-text-stroke:0.3px currentColor;">&quot;Hello, Algorand Dev!&quot;</div>
<div class="t" style="left:469.00px;top:1930.16px;font-size:52px;line-height:52px;color:#19a8a8;font-weight:700;letter-spacing:-2.4px;font-family:'Liberation Mono', monospace;-webkit-text-stroke:0.2px currentColor;">State</div>
<div class="t" style="left:502.00px;top:2033.02px;font-size:30px;line-height:30px;color:#b7c2ce;font-weight:400;letter-spacing:-1.2px;font-family:'Liberation Mono', monospace;-webkit-text-stroke:1.2px currentColor;">Global</div>
<div class="t" style="left:666.00px;top:2033.02px;font-size:30px;line-height:30px;color:#b7c2ce;font-weight:400;letter-spacing:-1.2px;font-family:'Liberation Mono', monospace;-webkit-text-stroke:1.2px currentColor;">Box</div>
<div class="r" style="left:469px;top:2086px;width:3274px;height:2px;background:#182b3c;border-radius:0;"></div>
<div class="r" style="left:469px;top:2082px;width:165px;height:4px;background:#19a8a8;border-radius:0;"></div>
<div class="r" style="left:501px;top:2120px;width:3209px;height:80px;background:#0d1e2f;border:2px solid #182b3c;border-radius:0;border-left:none;border-right:none;"></div>
<div class="t" style="left:518.00px;top:2147.02px;font-size:30px;line-height:30px;color:#b7c2ce;font-weight:400;letter-spacing:-1.2px;font-family:'Liberation Mono', monospace;-webkit-text-stroke:1.2px currentColor;">Key</div>
<div class="t" style="left:1405.00px;top:2147.02px;font-size:30px;line-height:30px;color:#b7c2ce;font-weight:400;letter-spacing:-1.2px;font-family:'Liberation Mono', monospace;-webkit-text-stroke:1.2px currentColor;">Type</div>
<div class="t" style="left:2474.00px;top:2147.02px;font-size:30px;line-height:30px;color:#b7c2ce;font-weight:400;letter-spacing:-1.2px;font-family:'Liberation Mono', monospace;-webkit-text-stroke:1.2px currentColor;">Value</div>
</body></html>
